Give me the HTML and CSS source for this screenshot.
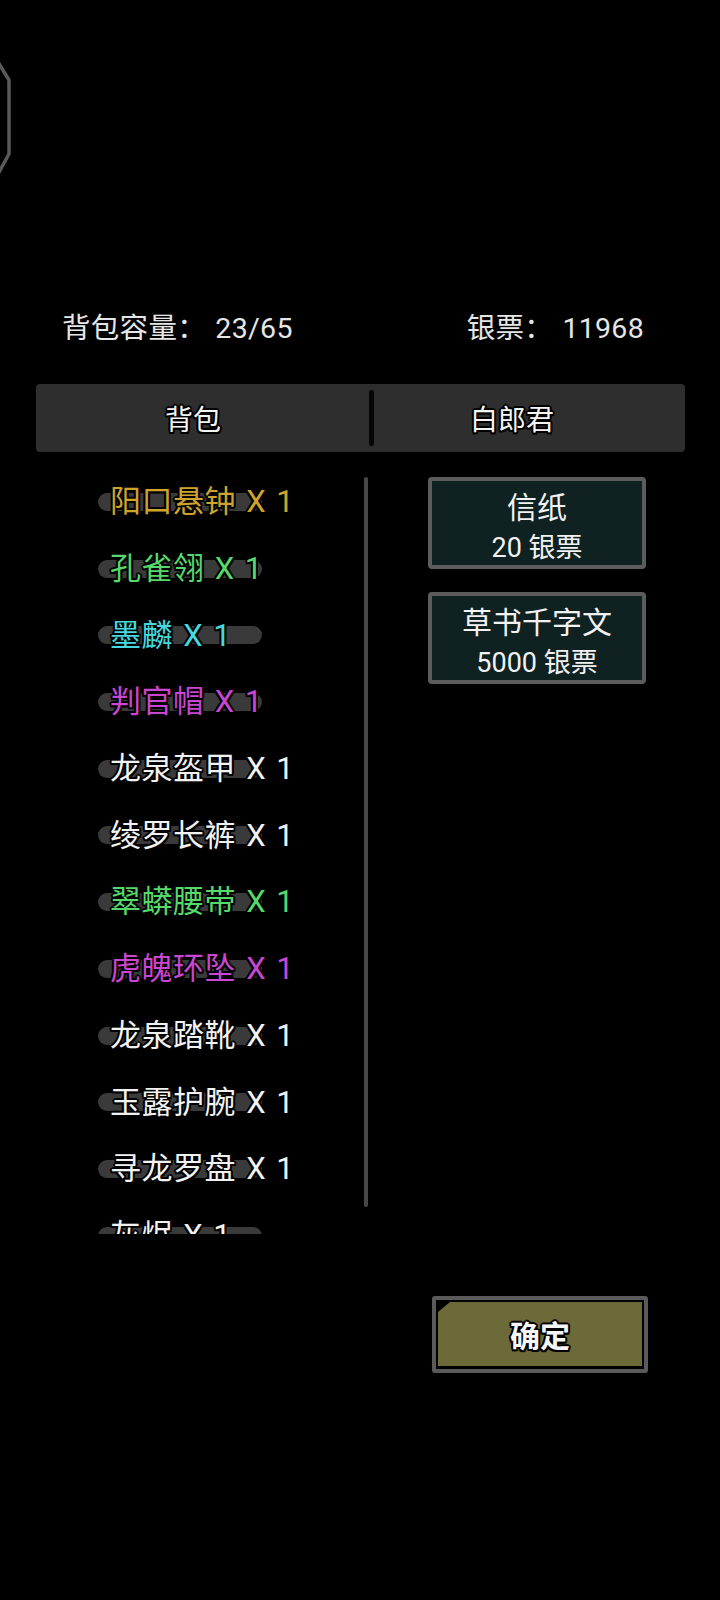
FILE: index.html
```html
<!DOCTYPE html>
<html lang="zh-CN">
<head>
<meta charset="utf-8">
<title>背包</title>
<link rel="stylesheet" href="styles.css">
</head>
<body>
<div class="screen">
  <svg class="deco" width="16" height="130" viewBox="0 0 16 130">
    <path d="M-2 4 L9 22 L9 96 L-2 116" fill="none" stroke="#5a5a5a" stroke-width="3.5" stroke-linejoin="round"/>
  </svg>

  <div class="header">
    <span class="stat">背包容量： 23/65</span>
    <span class="stat">银票： 11968</span>
  </div>

  <div class="tabs">
    <div class="tab tab-left">背包</div>
    <div class="tab-divider"></div>
    <div class="tab tab-right">白郎君</div>
  </div>

  <div class="main">
    <div class="list">
      <div class="item gold"><span class="label">阳口悬钟 X 1</span></div>
      <div class="item green"><span class="label">孔雀翎 X 1</span></div>
      <div class="item cyan"><span class="label">墨麟 X 1</span></div>
      <div class="item purple"><span class="label">判官帽 X 1</span></div>
      <div class="item white"><span class="label">龙泉盔甲 X 1</span></div>
      <div class="item white"><span class="label">绫罗长裤 X 1</span></div>
      <div class="item green"><span class="label">翠蟒腰带 X 1</span></div>
      <div class="item purple"><span class="label">虎魄环坠 X 1</span></div>
      <div class="item white"><span class="label">龙泉踏靴 X 1</span></div>
      <div class="item white"><span class="label">玉露护腕 X 1</span></div>
      <div class="item white"><span class="label">寻龙罗盘 X 1</span></div>
      <div class="item white"><span class="label">灰烬 X 1</span></div>
    </div>
    <div class="scrollbar"></div>
    <div class="shop">
      <div class="shop-btn">
        <div class="shop-name">信纸</div>
        <div class="shop-price">20 银票</div>
      </div>
      <div class="shop-btn">
        <div class="shop-name">草书千字文</div>
        <div class="shop-price">5000 银票</div>
      </div>
    </div>
  </div>

  <div class="footer">
    <div class="confirm">
      <div class="confirm-fill">确定</div>
    </div>
  </div>
</div>
</body>
</html>
```

FILE: styles.css
```css
html, body {
  margin: 0;
  padding: 0;
  background: #000;
}

body {
  font-family: Roboto, "Noto Sans CJK SC", sans-serif;
  color: #ececec;
}

.screen {
  position: relative;
  width: 720px;
  height: 1600px;
  overflow: hidden;
  background: #000;
}

.deco {
  position: absolute;
  left: 0;
  top: 58px;
}

.header {
  display: flex;
  justify-content: space-between;
  align-items: center;
  height: 40px;
  margin-top: 309px;
  padding: 0 76px 0 62px;
}

.stat {
  font-size: 28.5px;
  line-height: 40px;
  color: #e6e6e6;
  white-space: pre;
  word-spacing: 2px;
  letter-spacing: 0.3px;
}

.tabs {
  display: flex;
  align-items: center;
  height: 68px;
  margin: 35px 35px 0 36px;
  background: #2e2e2e;
  border-radius: 4px;
}

.tab {
  font-size: 28px;
  color: #f4f4f4;
  text-align: center;
  text-shadow: 0 0 2px #000, 1.5px 1.5px 0 #000, -1.5px -1.5px 0 #000, 1.5px -1.5px 0 #000, -1.5px 1.5px 0 #000, 0 2px 0 #000, 0 -2px 0 #000, 2px 0 0 #000, -2px 0 0 #000;
}

.tab-left {
  width: 314px;
}

.tab-divider {
  width: 5px;
  height: 56px;
  margin-left: 19px;
  background: #050505;
  border-radius: 3px;
}

.tab-right {
  width: 276px;
}

.main {
  display: flex;
  align-items: flex-start;
  margin-top: 16px;
}

.list {
  width: 266px;
  height: 766px;
  overflow: hidden;
  padding-left: 98px;
}

.item {
  position: relative;
  display: flex;
  align-items: center;
  height: 66.7px;
  padding-left: 12px;
}

.item::before {
  content: "";
  position: absolute;
  left: 0;
  top: 25px;
  width: 164px;
  height: 18px;
  border-radius: 9px;
  background: #3a3a3a;
}

.label {
  position: relative;
  top: 1px;
  font-size: 31px;
  line-height: 40px;
  white-space: pre;
  letter-spacing: 0.5px;
  word-spacing: 2px;
  text-shadow: 0 0 2px #000, 1.5px 1.5px 0 #000, -1.5px -1.5px 0 #000, 1.5px -1.5px 0 #000, -1.5px 1.5px 0 #000, 0 2px 0 #000, 0 -2px 0 #000, 2px 0 0 #000, -2px 0 0 #000;
}

.gold .label { color: #cfa42c; }
.green .label { color: #56d86a; }
.cyan .label { color: #45d8df; }
.purple .label { color: #c947d0; }
.white .label { color: #f2f2f2; }

.scrollbar {
  width: 4px;
  height: 730px;
  margin-top: 9px;
  background: #484848;
  border-radius: 2px;
}

.shop {
  display: flex;
  flex-direction: column;
  gap: 23px;
  margin-top: 9px;
  margin-left: 60px;
  width: 218px;
}

.shop-btn {
  box-sizing: border-box;
  height: 92px;
  padding-top: 6px;
  border: 4px solid #5c5c5c;
  border-radius: 4px;
  background: #0f2121;
  display: flex;
  flex-direction: column;
  align-items: center;
}

.shop-name {
  font-size: 30px;
  line-height: 42px;
  color: #f2f2f2;
}

.shop-price {
  font-size: 27px;
  line-height: 38px;
  color: #f2f2f2;
}

.footer {
  display: flex;
  justify-content: flex-end;
  margin-top: 62px;
  padding-right: 72px;
}

.confirm {
  box-sizing: border-box;
  width: 216px;
  height: 77px;
  border: 4px solid #5a5a5a;
  border-radius: 3px;
  background: #000;
  padding: 2px 2px 3px 2px;
}

.confirm-fill {
  height: 100%;
  background: #6c6a39;
  clip-path: polygon(12px 0, 100% 0, 100% 100%, 0 100%, 0 10px);
  display: flex;
  align-items: center;
  justify-content: center;
  font-size: 30px;
  font-weight: 700;
  color: #f6f6f6;
  text-shadow: 0 0 2px #000, 1.5px 1.5px 0 #000, -1.5px -1.5px 0 #000, 1.5px -1.5px 0 #000, -1.5px 1.5px 0 #000, 0 2px 0 #000, 0 -2px 0 #000, 2px 0 0 #000, -2px 0 0 #000;
}
```
